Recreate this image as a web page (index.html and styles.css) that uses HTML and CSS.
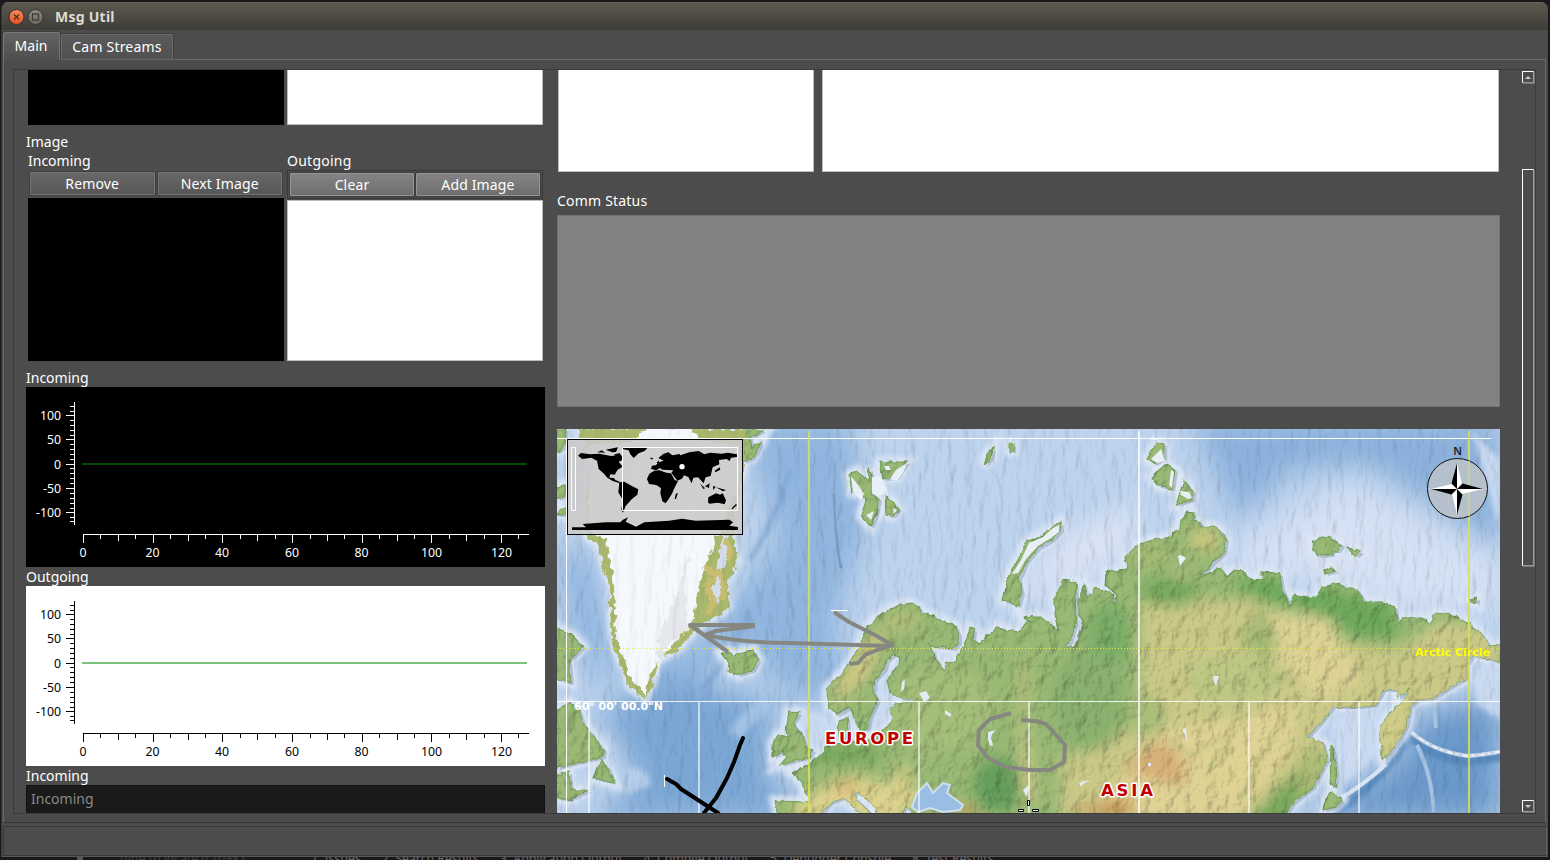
FILE: index.html
```html
<!DOCTYPE html>
<html lang="en">
<head>
<meta charset="utf-8">
<title>Msg Util</title>
<link rel="stylesheet" href="styles.css">
</head>
<body>
<div class="window">
  <header class="titlebar">
    <svg class="win-buttons" width="38" height="18" viewBox="0 0 38 18">
      <defs><linearGradient id="red" x2="0" y2="1"><stop stop-color="#f68b63"/><stop offset="1" stop-color="#e4521f"/></linearGradient><linearGradient id="gry" x2="0" y2="1"><stop stop-color="#8e8c83"/><stop offset="1" stop-color="#6b6960"/></linearGradient></defs>
      <circle cx="9.500" cy="9" r="7.500" fill="url(#red)" stroke="#3a2e28"/>
      <path d="M7 6.500l5 5M12 6.500l-5 5" stroke="#5b2b19" stroke-width="1.400"/>
      <circle cx="28.500" cy="9" r="7.500" fill="url(#gry)" stroke="#35342f"/>
      <rect x="25.500" y="6" width="6" height="6" fill="none" stroke="#3b3a35" stroke-width="1.300"/>
    </svg>
    <h1>Msg Util</h1>
  </header>
  <nav class="tabs"><div class="tab active">Main</div><div class="tab">Cam Streams</div></nav>
  <main class="pane">
    <div class="scroll">
      <section class="left">
        <div class="pair top"><div class="black"></div><div class="white"></div></div>
        <div class="label image-title">Image</div>
        <div class="pair images">
          <div class="col">
            <div class="label">Incoming</div>
            <div class="buttons"><div class="btn">Remove</div><div class="btn">Next Image</div></div>
            <div class="black"></div>
          </div>
          <div class="col out">
            <div class="label">Outgoing</div>
            <div class="buttons"><div class="btn">Clear</div><div class="btn">Add Image</div></div>
            <div class="white"></div>
          </div>
        </div>
        <div class="label first">Incoming</div>
        <svg class="plot dark" width="519" height="180">
          <g id="plot-axes">
            <g fill="none" stroke="currentColor" shape-rendering="crispEdges">
              <path d="M48.5 15V138M40 28.5h8M40 52.5h8M40 77.5h8M40 101.5h8M40 125.5h8"/>
              <path d="M44 19.500h4M44 24.500h4M44 33.500h4M44 38.500h4M44 43.500h4M44 48.500h4M44 57.500h4M44 62.500h4M44 67.500h4M44 72.500h4M44 81.500h4M44 86.500h4M44 91.500h4M44 96.500h4M44 106.500h4M44 111.500h4M44 116.500h4M44 121.500h4M44 130.500h4M44 134.500h4"/>
              <path d="M57 147.500H503M57.500 148v8M127.500 148v8M196.500 148v8M266.500 148v8M336.500 148v8M405.500 148v8M475.500 148v8"/>
              <path d="M92.500 148v6M162.500 148v6M231.500 148v6M301.500 148v6M371.500 148v6M440.500 148v6M74.500 148v4M109.500 148v4M144.500 148v4M179.500 148v4M214.500 148v4M249.500 148v4M284.500 148v4M318.500 148v4M353.500 148v4M388.500 148v4M423.500 148v4M458.500 148v4M492.500 148v4"/>
            </g>
            <g class="ticks" fill="currentColor">
              <g text-anchor="end"><text x="35" y="33">100</text><text x="35" y="57">50</text><text x="35" y="82">0</text><text x="35" y="106">-50</text><text x="35" y="130">-100</text></g>
              <g text-anchor="middle"><text x="57" y="170">0</text><text x="126.500" y="170">20</text><text x="196" y="170">40</text><text x="266" y="170">60</text><text x="335.500" y="170">80</text><text x="405.500" y="170">100</text><text x="475.500" y="170">120</text></g>
            </g>
          </g>
          <path d="M56 77H501" stroke="#064a06" stroke-width="2"/>
        </svg>
        <div class="label">Outgoing</div>
        <svg class="plot light" width="519" height="180"><use href="#plot-axes"/><path d="M56 77H501" stroke="#7cc47c" stroke-width="2"/></svg>
        <div class="label">Incoming</div>
        <div class="field">Incoming</div>
      </section>
      <section class="right">
        <div class="pair views"><div class="white"></div><div class="white wide"></div></div>
        <div class="label comm">Comm Status</div>
        <div class="status"></div>
        <svg class="map" width="943" height="384" viewBox="557 429 943 384">
          <defs>
            <filter id="b1" x="-30%" y="-30%" width="160%" height="160%"><feGaussianBlur stdDeviation=".7"/></filter>
            <filter id="b4" x="-30%" y="-30%" width="160%" height="160%"><feGaussianBlur stdDeviation="2.500"/></filter>
            <filter id="b20" x="-60%" y="-60%" width="220%" height="220%"><feGaussianBlur stdDeviation="14"/></filter>
            <filter id="b8" x="-60%" y="-60%" width="220%" height="220%"><feGaussianBlur stdDeviation="7"/></filter>
            <filter id="land" filterUnits="userSpaceOnUse" x="557" y="429" width="943" height="384" color-interpolation-filters="sRGB">
              <feTurbulence type="fractalNoise" baseFrequency=".16 .12" numOctaves="2" seed="4" result="n"/>
              <feDisplacementMap in="SourceGraphic" in2="n" scale="5" xChannelSelector="R" yChannelSelector="G" result="g"/>
              <feTurbulence type="fractalNoise" baseFrequency=".075 .06" numOctaves="4" seed="21"/>
              <feDiffuseLighting surfaceScale="2.300" lighting-color="#fff" diffuseConstant="1.200"><feDistantLight azimuth="215" elevation="55"/></feDiffuseLighting>
              <feComposite in2="g" operator="arithmetic" k1=".55" k2="0" k3=".45" k4="0"/>
              <feComposite in2="g" operator="in"/>
            </filter>
            <filter id="ice" filterUnits="userSpaceOnUse" x="557" y="429" width="943" height="384" color-interpolation-filters="sRGB">
              <feTurbulence type="fractalNoise" baseFrequency=".18 .14" numOctaves="2" seed="4" result="n"/>
              <feDisplacementMap in="SourceGraphic" in2="n" scale="9" xChannelSelector="R" yChannelSelector="G" result="g"/>
              <feTurbulence type="fractalNoise" baseFrequency=".12 .03" numOctaves="2" seed="3"/>
              <feDiffuseLighting surfaceScale=".7" lighting-color="#fff" diffuseConstant="1.220"><feDistantLight azimuth="200" elevation="55"/></feDiffuseLighting>
              <feComposite in2="g" operator="arithmetic" k1=".4" k2="0" k3=".6" k4="0"/>
              <feComposite in2="g" operator="in"/>
            </filter>
            <filter id="sea" filterUnits="userSpaceOnUse" x="557" y="429" width="943" height="384" color-interpolation-filters="sRGB">
              <feTurbulence type="fractalNoise" baseFrequency=".1 .035" numOctaves="3" seed="8"/>
              <feDiffuseLighting surfaceScale="1.500" lighting-color="#fff" diffuseConstant="1.220"><feDistantLight azimuth="190" elevation="55"/></feDiffuseLighting>
              <feComposite in2="SourceGraphic" operator="arithmetic" k1=".33" k2="0" k3=".67" k4="0"/>
            </filter>
            <path id="eurasia" d="M829 708L827 690 832 683 843 672 852 660 862 640 866 630 874 620 885 612 900 605 910 603 918 606 922 613 930 615 940 619 955 626 959 634 959 643 953 649 937 647 928 644 933 652 937 663 945 670 947 662 955 663 957 657 962 648 967 638 970 628 974 630 973 640 980 644 987 635 993 632 997 626 1007 630 1017 632 1023 627 1030 617 1040 617 1052 625 1058 632 1055 614 1055 598 1063 580 1075 582 1076 595 1075 625 1070 642 1064 648 1074 646 1080 635 1083 622 1079 614 1079 598 1084 585 1088 598 1095 588 1104 590 1113 595 1115 608 1117 595 1105 585 1106 572 1127 569 1125 557 1138 545 1152 540 1172 537 1174 532 1180 528 1181 520 1187 512 1194 513 1193 520 1200 522 1200 528 1213 526 1222 532 1226 540 1224 553 1213 563 1197 580 1208 573 1220 568 1227 577 1233 571 1243 572 1247 578 1262 580 1262 571 1280 574 1282 588 1290 605 1295 595 1306 598 1317 598 1322 587 1340 583 1346 589 1357 589 1365 602 1383 602 1395 607 1398 625 1402 618 1423 618 1430 625 1435 613 1453 615 1468 623 1480 632 1490 646 1500 645V662L1483 658 1473 655 1466 665 1467 678 1457 683 1433 698 1417 700 1410 707 1407 723 1403 733 1393 748 1383 760 1380 743 1380 727 1390 713 1404 700 1412 684 1406 692 1397 698 1397 690 1383 690 1375 705 1360 707 1333 707 1320 723 1307 737 1323 743 1327 760 1313 787 1293 803 1285 815H913L906 806 900 815H878L875 807 857 792 853 796 862 804 872 815H862L848 802 843 798 830 803 820 815H778L775 801 810 802 805 793 803 783 792 773 807 765 817 758 827 747 841 743 838 730 840 720 847 717 848 730 852 742 867 740 887 727 893 720 890 710 897 703 910 702 925 698 903 699 890 693 887 680 899 665 900 657 893 655 887 661 885 669 875 680 873 692 878 700 870 717 868 728 860 732 855 720 850 707 837 715Z"/>
            <g id="isles">
              <path d="M557 429H566L564 447 557 452ZM557 487L567 484 564 496 557 499ZM561 509h5v6h-9ZM557 628L573 636 583 647 569 660 571 683 557 679ZM557 710L569 702 579 710 583 723 596 740 604 750 603 757 576 763 557 768ZM601 760L609 770 614 783 593 778ZM557 775L569 772 571 790 589 790 569 800 557 798Z"/>
              <path d="M721 653L729 651 733 657 742 652 753 650 758 660 753 670 739 675 728 671 729 664ZM789 712L799 713 793 723 802 735 807 748 813 750 810 757 790 762 780 765 787 757 782 750 789 744 786 731ZM778 735L788 737 786 750 773 757 773 743Z"/>
              <path d="M743 462L752 458 756 453 761 442 752 446 750 438 763 430H744ZM849 475L857 471 868 482 869 468 874 482 871 493 879 499 876 515 871 527 861 515 866 500 862 491 852 493ZM880 462H907L896 478 883 479ZM885 495L899 509 893 516 886 515ZM984 466l3-12 6-6-2 10zM1010 444h3v7h-3z"/>
              <path d="M1060 522L1061 530 1052 540 1038 548 1026 562 1019 579 1022 593 1018 606 1003 600 1009 575 1018 560 1026 542 1042 535 1053 526ZM1024 617l8-1 7 4-7 3zM1147 459L1157 443 1164 444 1164 458 1154 464ZM1151 477L1166 464 1175 470 1172 489 1158 486ZM1176 505L1184 480 1193 492 1192 500ZM1313 540L1329 537 1342 545 1338 551 1332 551 1332 555 1318 556 1312 548ZM1346 547L1361 552 1356 556ZM1324 571l7-4 4 4-10 3zM1470 600l7-2v5z"/>
              <path d="M1331 745L1334 753 1337 773 1335 787 1330 783ZM1330 792L1342 800 1335 807 1323 810 1325 802ZM860 722h6l-2 8h-5z"/>
            </g>
            <path id="greenland" d="M584 535L597 545 603 565 610 590 610 615 613 647 623 670 628 687 646 700 653 683 659 660 679 650 689 637 702 625 725 612 729 608 728 582 734 570 738 562 733 535 745 465V429H580V440L590 450Z"/>
            <clipPath id="landclip"><use href="#eurasia"/><use href="#isles"/></clipPath>
          </defs>
          <g filter="url(#sea)">
            <rect x="550" y="425" width="960" height="395" fill="#bdd3ee"/>
            <g filter="url(#b20)">
              <path d="M740 420H850L870 520 835 620 850 700 790 700 740 640 700 690 650 700 610 660 690 650 740 590 780 540Z" fill="#90b6df"/>
              <path d="M556 540L590 560 610 640 600 700 570 620Z" fill="#8db3df"/>
              <path d="M600 710L670 680 770 700 770 780 820 820H590L640 780Z" fill="#7ca7d5"/>
              <path d="M1190 420H1500V550L1440 510 1370 465 1290 470 1240 520Z" fill="#8bb1dc"/>
              <path d="M1390 770L1430 710 1500 700V820H1300Z" fill="#6a99ca"/>
              <path d="M870 430H1150L1120 500 1080 560 960 600 890 580Z" fill="#bdd3ee"/>
              <path d="M1240 540L1350 485 1500 560V610H1400L1300 580 1230 575Z" fill="#d5e1f4"/>
              <path d="M1060 540L1140 500 1130 550 1080 580 1000 610Z" fill="#dbe5f5"/>
            </g>
            <g fill="none">
              <path d="M1411 737Q1432 758 1468 762Q1490 759 1502 756M1335 812Q1375 788 1405 742" stroke="#5587bb" stroke-width="8" filter="url(#b4)"/>
              <path d="M1411 732Q1432 751 1468 756Q1490 754 1502 751" stroke="#c5d5e8" stroke-width="4" filter="url(#b1)"/>
              <path d="M1413 733Q1434 752 1468 756Q1490 754 1502 751" stroke="#eef3f8" stroke-width="2" stroke-dasharray="3 4 6 3"/>
              <path d="M1340 799Q1370 780 1386 764" stroke="#d8e4f3" stroke-width="4" filter="url(#b1)"/>
              <path d="M1417 745Q1432 775 1434 812M1434 702L1436 728" stroke="#a6c2e0" stroke-width="4" filter="url(#b1)"/>
              <path d="M834 494Q835 540 841 568" stroke="#7c9fca" stroke-width="2.500" filter="url(#b1)"/>
              <path d="M750 560Q775 520 790 470M700 690Q725 670 750 610M680 750Q700 700 710 690" stroke="#7ba3d1" stroke-width="4" filter="url(#b4)"/>
              <path d="M600 735Q612 765 618 792" stroke="#b8d0ec" stroke-width="18" filter="url(#b4)"/>
              <path d="M610 770Q650 760 650 785L625 795Z" fill="#b3cdea" filter="url(#b4)"/>
              <path d="M735 735Q750 710 790 690" stroke="#a3c2e5" stroke-width="14" filter="url(#b4)"/>
            </g>
            <g fill="#dde7f5" stroke="#dce6f5" stroke-width="11" filter="url(#b4)"><use href="#eurasia"/><use href="#isles"/><use href="#greenland" stroke-width="7"/></g>
            <path d="M1472 430L1500 460V530M755 560Q735 600 715 625M1330 720L1380 700 1376 755 1343 785ZM1470 670l30-10v60l-22-15zM795 710l35 5 8 25-25 12zM845 715l50-50v50l-30 20z" fill="#ccdcf2" filter="url(#b4)" opacity=".9"/>
          </g>
          <g fill="#8d9bb5" opacity=".5" transform="translate(3 2)" filter="url(#b1)"><use href="#eurasia"/><use href="#isles"/></g>
          <g filter="url(#land)">
            <g fill="#99b975" stroke="#7aa660" stroke-width="1.500"><use href="#eurasia"/><use href="#isles"/></g>
            <g clip-path="url(#landclip)">
              <g filter="url(#b8)">
                <path d="M1140 600L1180 570 1210 600 1260 600 1300 640 1330 640 1400 650 1440 620 1500 630V700L1400 760 1310 750 1280 820H1060L1060 760 1110 740 1140 690Z" fill="#cbc988"/>
                <path d="M1270 610L1330 620 1360 680 1320 700 1280 660Z" fill="#ddd395"/>
                <path d="M1130 770L1160 730 1230 720 1300 700 1290 750 1240 820H1080Z" fill="#dfd394"/>
                <path d="M1120 770L1160 738 1182 755 1186 785 1160 782Z" fill="#d8b077"/>
                <path d="M1065 812L1120 799 1140 806 1120 816Z" fill="#c58a45"/>
                <ellipse cx="1235" cy="680" rx="50" ry="25" fill="#bcc884"/>
                <ellipse cx="1140" cy="715" rx="26" ry="20" fill="#a8bd79"/>
                <ellipse cx="1110" cy="635" rx="24" ry="32" fill="#7bae67"/>
                <ellipse cx="1090" cy="700" rx="38" ry="50" fill="#8ab16e"/>
                <ellipse cx="998" cy="785" rx="24" ry="27" fill="#659f5b"/>
                <ellipse cx="1170" cy="592" rx="32" ry="14" fill="#74a960"/>
                <ellipse cx="1150" cy="555" rx="16" ry="9" fill="#a9bd73"/>
                <ellipse cx="1205" cy="540" rx="16" ry="12" fill="#cac881"/>
                <path d="M1026 650V720L1036 810 1022 790 1021 670Z" fill="#d9cb8a"/>
                <path d="M1335 590L1390 604 1400 635 1360 640 1320 612 1260 600 1225 580 1260 578Z" fill="#6da95c"/>
                <path d="M1280 640L1265 660 1235 640 1260 610Z" fill="#a6bb76"/>
                <path d="M1245 820L1280 785 1310 760 1318 750 1330 770 1290 820Z" fill="#7aa95d"/>
                <path d="M835 705L838 680 875 630 885 640 865 680Z" fill="#d2c985"/>
                <path d="M885 615L920 612 915 625 890 635Z" fill="#b8c17a"/>
                <path d="M800 800L830 782 855 775 890 785 905 760 920 800 900 820H790Z" fill="#ddd38e"/>
                <path d="M830 790L860 780 850 792ZM960 815L945 800 985 815Z" fill="#d89153"/>
                <ellipse cx="940" cy="710" rx="55" ry="42" fill="#a4bf7a"/>
                <ellipse cx="840" cy="754" rx="44" ry="9" fill="#75a65c"/>
                <path d="M557 429H572V520H557ZM550 710H600V770H550ZM721 650H760V675H721ZM550 625H575V690H550Z" fill="#d0cb82"/>
                <path d="M1385 720L1410 700 1404 733 1385 760ZM1295 795L1322 750 1325 762 1308 790Z" fill="#d3cd88"/>
              </g>
              <path d="M1028 655L1022 672 1026 720M1250 710L1210 770M1290 705L1240 800M1255 600Q1270 640 1262 660T1300 680M1170 740L1190 755 1230 735M900 770L908 785 895 797" fill="none" stroke="#87a962" stroke-width="3" opacity=".35" filter="url(#b4)"/>
            </g>
          </g>
          <g filter="url(#ice)">
            <use href="#greenland" fill="#a9b86d"/>
            <path d="M588 530L606 540 614 585 616 640 629 675 646 696 651 670 673 645 692 624 700 580 715 540 740 480V446L700 440 690 428H650L630 442 590 445Z" fill="#f5f8fc"/>
            <path d="M690 550l-6 40 4 40-20 14-12 35 2-40 20-50z" fill="#e6e8ee"/>
            <path d="M722 535l8 0-4 26-6 14 6 14-8 14-10-4 8-20z" fill="#d5dceb"/>
            <path d="M726 540l5 12-4 8M704 566l12 8-10 14 8 10-6 16M718 570l6 12-2 18" fill="none" stroke="#c8bd70" stroke-width="6"/>
          </g>
          <g fill="#e9eff7">
            <path d="M1059 525L1059 532 1051 538 1038 546 1026 559 1018 573 1012 574 1021 560 1029 543 1043 537 1053 528Z"/>
            <path d="M1151 459l10-10 4 12-8 2zM1171 470l3 2-2 16-3-3zM1180 491l9 1 3 6-4 1-7-4zM1178 556l3-1 5 3-6 8zM851 476l8 10 5 8-3 6-8-8zM872 477l9 0 6 13-8 6-7-3zM884 466l5 0 2 4-5 0zM896 470l11-7-4 10-6 8-7-2zM866 515l8-4-3 9zM893 508l4 2-3 4zM1150 440l3-4 5 4z"/>
          </g>
          <g fill="#e2eaf5">
            <path d="M912 807L917 793 927 783 933 793 943 783 950 785 947 793 963 805 960 810 943 812 930 808 918 812Z" fill="#9abde3" stroke="#cfdff1" stroke-width="2"/>
            <path d="M919 693l7-2 4 7-6 4zM945 710l6 4v3l-6-3zM902 682l3-3-1 10-3 3zM1213 676h6l-3 10-2-4zM988 732l8-2-4 4-1 4 2 7-3 1-2-7zM1081 787l-2-4q5-3 12-2q-8 1-10 6zM1182 729l4-1 2 18-3-12zM1023 790l6-5-2 12-3-5zM1148 763h3v3h-3z"/>
          </g>
          <g fill="none" stroke="#fff" shape-rendering="crispEdges">
            <path d="M557 438.500H1491M566.500 438V813"/>
            <path d="M557 701.500H1500" opacity=".85"/>
            <path d="M589 702V813M699 702V813M919 702V813M1029 702V813M1249 702V813M1359 702V813" stroke-width="2" opacity=".6"/>
            <path d="M1139 431V813" stroke-width="2" opacity=".75"/>
            <path d="M809 431V813M1469 431V813" stroke="#d9e052" stroke-width="2" opacity=".85"/>
            <path d="M557 648.500H1500" stroke="#e7ec2c" stroke-dasharray="1 2"/>
          </g>
          <g fill="none" stroke="#878782" stroke-width="4" stroke-linejoin="round">
            <path d="M755 625H690L728 652M755 626L716 631 705 635Q745 643 790 643L890 646M834 612L849 622 875 635 892 645 877 650 865 655 858 663 849 664"/>
            <path d="M1011 713L990 719 979 730 978 745 988 758 1005 767 1030 770 1050 770 1064 762 1065 745 1046 724 1036 721 1021 720"/>
            <path d="M667 779L676 784 681 789 718 813M743 738L740 745 734 762 727 778 716 798 704 813" stroke="#000" stroke-linecap="round"/>
          </g>
          <path d="M664.500 775v12M831 610.500h17" stroke="#fff"/>
          <g class="geo">
            <text x="574" y="710" textLength="89" fill="#fff">60° 00' 00.0"N</text>
            <text x="1415" y="656" textLength="75" fill="#ff0">Arctic Circle</text>
            <g class="continent"><text x="825" y="744" textLength="88">EUROPE</text><text x="1101" y="796" textLength="52">ASIA</text></g>
          </g>
          <g fill="#fff" stroke="#000"><path d="M1027.500 800.500h2v5h-2zM1018.500 809.500h5v2h-5zM1032.500 809.500h6v2h-6z"/></g>
          <rect x="567.500" y="439.500" width="175" height="95" fill="#cacaca" fill-opacity=".9" stroke="#000"/>
          <g transform="translate(556 425) scale(.33333)">
            <path d="M66 92L75 84 103 88 130 86 165 93 187 91 197 106 188 110 200 125 185 134 176 149 163 148 160 158 174 159 178 165 191 170 190 174 170 168 154 158 144 146 128 132 123 107 106 98 79 102ZM124 82L137 76 148 83ZM149 74L186 67 180 81 169 82ZM173 89L190 84 200 96 197 107 188 99ZM198 67H276L266 78 248 85 233 99 223 88 218 76 198 72Z"/>
            <path d="M190 172L205 170 226 182 247 193 244 209 227 223 209 243 201 263 196 253 201 226 187 202ZM280 146L295 137 310 136 331 143 345 145 356 165 366 168 355 190 348 206 336 225 329 235 319 229 313 205 315 190 301 180 279 177 273 162ZM359 207L366 204 360 222 356 222Z"/>
            <path d="M285 132L288 122 299 121 309 112 323 107 307 99 323 86 337 82 349 91 371 87 373 91 400 82 428 78 445 88 462 83 497 86 515 83 544 88 543 96 525 98 521 108 512 102 489 105 490 118 470 127 464 153 449 157 443 175 426 157 412 158 407 175 397 156 384 151 378 161 364 167 346 143 352 136 318 134 313 129 300 136ZM476 137L491 127 493 134 478 142ZM432 175L447 190 442 192ZM447 184l14-9-2 14zM471 183l8 2-7 10zM480 187l30 8-9 4zM456 232L457 217 480 205 492 209 500 205 510 226 506 238 486 233 460 236ZM540 237l3 3-14 13-2-3zM302 113l6-7 2 15zM281 99l10-1-2 6z"/>
            <path d="M48 307H90L80 297 150 292 193 292 201 284 216 277 209 290 240 305 265 292 339 287 378 281 419 287 520 284 531 292 520 302 546 306V315H48Z"/>
            <path d="M199.500 67.500H544.500V256.500H199.500ZM46.500 67.500H58.500V256.500H46.500Z" fill="none" stroke="#fff" stroke-width="3"/>
            <circle cx="378" cy="125" r="8" fill="#fff"/>
          </g>
          <circle cx="1457.500" cy="488.500" r="30" fill="#b9c1cb" fill-opacity=".92" stroke="#111"/>
          <path d="M1469 461V516" stroke="#c9cf9c" stroke-width="2"/>
          <path d="M1457 463L1462 484 1483 489 1462 494 1457 515 1452 494 1431 489 1452 484Z" fill="#fff"/>
          <path d="M1457 463V489L1451.500 483.500ZM1483 489H1457L1462.500 483.500ZM1457 515V489L1462.500 494.500ZM1431 489H1457L1451.500 494.500Z" fill="#000"/>
          <text class="north" x="1457.500" y="455" text-anchor="middle">N</text>
        </svg>
      </section>
      <aside class="scrollbar"><div class="arrow"><svg width="6" height="3"><path d="M0 3L3 0 6 3z" fill="#ccc"/></svg></div><div class="thumb"></div><div class="arrow"><svg width="6" height="3"><path d="M0 0L3 3 6 0z" fill="#ccc"/></svg></div></aside>
    </div>
  </main>
  <footer class="statusbar"></footer>
</div>
<div class="behind"><i></i><span class="locate">Type to locate (Ctrl+K)</span><span>1&nbsp; Issues</span><span>2&nbsp; Search Results</span><span>3&nbsp; Application Output</span><span>4&nbsp; Compile Output</span><span>5&nbsp; Debugger Console</span><span>8&nbsp; Test Results</span></div>
</body>
</html>
```
FILE: styles.css
```css
* { box-sizing: border-box; }
html, body { height: 860px; overflow: hidden; }
body { margin: 0; padding: 2px 2px 0 1px; background: #1b1819; color: #fff; font: 14px/18px "Noto Sans", "Open Sans", sans-serif; }
svg { display: block; }
.window { height: 855px; display: flex; flex-direction: column; background: #4c4c4c; border-radius: 7px 7px 0 0; border-left: 1px solid #383838; border-bottom: 1px solid #595959; overflow: hidden; }
.titlebar { height: 28px; flex: none; display: flex; align-items: center; gap: 8px; padding-left: 5px; background: linear-gradient(#5c594f, #3d3c37); border-top: 1px solid #68655a; }
.titlebar h1 { margin: 0; padding-left: 2px; font-size: 14px; line-height: 18px; font-weight: 700; letter-spacing: .25px; color: #dfdbd2; }
.tabs { height: 30px; flex: none; display: flex; align-items: flex-end; padding: 2px 0 0 1px; gap: 1px; position: relative; z-index: 1; }
.tab { height: 25px; width: 112px; border: 1px solid #6c6c6c; border-bottom: 0; border-radius: 2px 2px 0 0; text-align: center; line-height: 24px; letter-spacing: .2px; background: linear-gradient(#5b5b5b, #505050); margin-bottom: 1px; box-shadow: 0 0 0 1px #3e3e3e; clip-path: inset(-1px -1px 0 -1px); }
.tab.active { width: 57px; height: 28px; line-height: 25px; letter-spacing: 0; padding-right: 1px; background: linear-gradient(#636363, #4f4f4f); margin-bottom: 0; border-color: #777; }
.pane { height: 764px; flex: none; margin: -1px 2px 0 1px; padding: 9px; border: 1px solid #686868; border-bottom-color: #343434; }
.scroll { height: 745px; display: flex; border: 1px solid #3a3a3a; overflow: hidden; }
.left { width: 519px; margin-left: 12px; flex: none; }
.right { width: 943px; margin-left: 12px; flex: none; }
.pair { display: flex; }
.black { width: 256px; background: #000; }
.white { width: 256px; background: #fff; border: 1px solid #bdbdbd; }
.top { height: 55px; padding-left: 2px; gap: 3px; }
.top .white, .views .white { border-top: 0; }
.label { height: 19px; line-height: 18px; white-space: nowrap; }
.left > .label { padding-top: 1px; }
.left > .image-title { margin-top: 8px; padding-top: 0; }
.images { padding-left: 2px; gap: 3px; height: 209px; }
.col { width: 256px; }
.col .label { height: 18px; }
.out .label { letter-spacing: .25px; }
.images .black { height: 163px; margin-top: 2px; }
.buttons { height: 26px; padding: 1px; display: flex; gap: 1px; }
.btn { width: 127px; height: 25px; border: 1px solid #3e3e3e; border-radius: 2px; box-shadow: inset 0 0 0 1px #757575; background: linear-gradient(#686868, #565656); text-align: center; line-height: 23px; letter-spacing: .15px; }
.out .buttons { height: 29px; padding: 1px; border: 1px solid #393939; gap: 0; }
.out .btn { width: 126px; height: 25px; line-height: 23px; box-shadow: inset 0 0 0 1px #969696; background: linear-gradient(#858585, #6d6d6d); }
.images .white { height: 161px; margin-top: 1px; }
.left > .first { margin-top: 7px; }
.plot.dark { background: #000; color: #fff; }
.plot.light { background: #fff; color: #000; }
.ticks { font: 12.3px "Noto Sans", sans-serif; }
.field { height: 40px; padding: 4px; background: #1a1a1a; border: 1px solid #121212; color: #898989; line-height: 18px; }
.views { height: 102px; gap: 8px; padding-left: 1px; }
.views .wide { width: 677px; }
.comm { margin-top: 20px; height: 19px; letter-spacing: .2px; }
.status { height: 192px; margin: 4px 0 22px; background: #828282; border: 1px solid #727272; }
.map text { white-space: pre; }
.geo { font: bold 11px "DejaVu Sans", sans-serif; }
.continent { font-size: 16.5px; fill: #c00000; stroke: #fff; stroke-width: 3px; paint-order: stroke; stroke-linejoin: round; }
.north { font: 600 11px "Noto Sans", sans-serif; fill: #222; }
.scrollbar { width: 13px; margin-left: 21px; padding: 1px 0; display: flex; flex-direction: column; justify-content: space-between; align-items: flex-end; }
.arrow, .thumb { width: 12px; border: 1px solid #fff; border-right-color: #999; border-bottom-color: #999; box-shadow: 1px 1px #777; }
.arrow { height: 12px; display: flex; align-items: center; justify-content: center; }
.thumb { height: 397px; margin-bottom: 148px; }
.statusbar { height: 30px; margin: 3px 1px 0; border: 1px solid #373737; border-right-color: #606060; }
.behind { height: 3px; overflow: hidden; display: flex; gap: 21px; color: #6c6a6b; font-size: 12.3px; line-height: 14px; padding-left: 76px; white-space: nowrap; }
.behind i { width: 6px; background: #555; }
.behind span { margin-top: -5px; }
.behind .locate { width: 186px; padding-left: 14px; color: #3f3d3e; }
```
